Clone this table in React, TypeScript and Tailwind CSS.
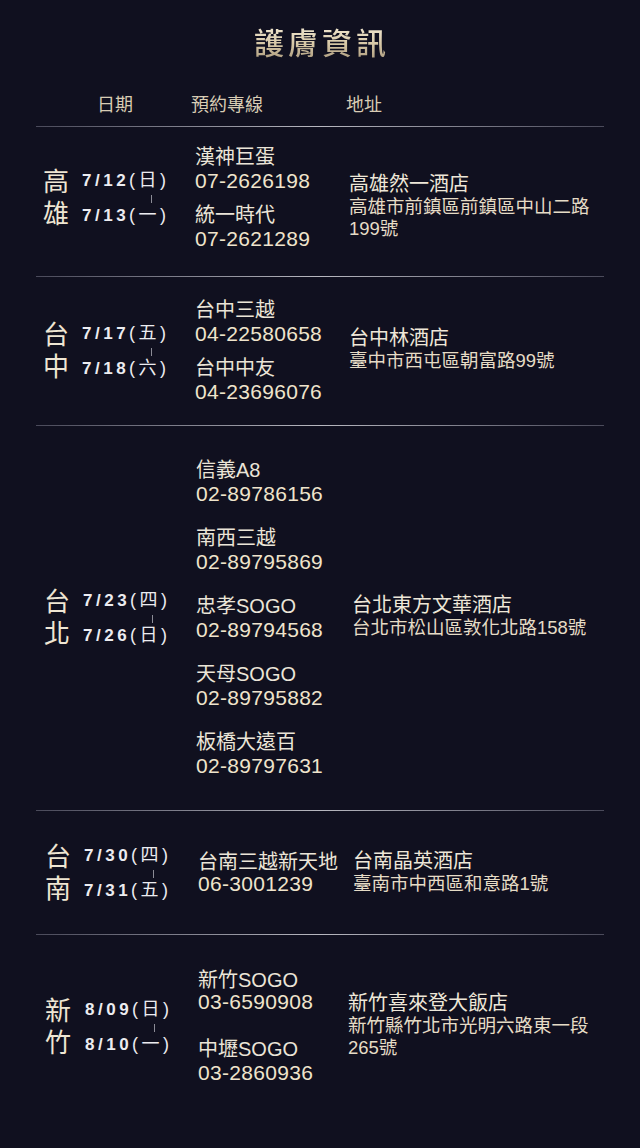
import React from "react";

type Phone = { name: string; tel: string; mt: string; lh: string };
type Section = {
  city: [string, string];
  dates: [[string, string], [string, string]];
  phones: Phone[];
  addrTitle: string;
  addrLines: string[];
  pad: string;
  rowPl: string;
  cityW: string;
  dateW: string;
  phoneW: string;
  addrMt: string;
  line: boolean;
};

const sections: Section[] = [
  {
    city: ["高", "雄"],
    dates: [["7/12", "日"], ["7/13", "一"]],
    phones: [
      { name: "漢神巨蛋", tel: "07-2626198", mt: "mt-0", lh: "leading-[24px]" },
      { name: "統一時代", tel: "07-2621289", mt: "mt-[10px]", lh: "leading-[24px]" },
    ],
    addrTitle: "高雄然一酒店",
    addrLines: ["高雄市前鎮區前鎮區中山二路", "199號"],
    pad: "pt-[18px] pb-[25px]",
    rowPl: "pl-[43px]",
    cityW: "w-[39px]",
    dateW: "w-[113px]",
    phoneW: "w-[154px]",
    addrMt: "mt-[16px]",
    line: true,
  },
  {
    city: ["台", "中"],
    dates: [["7/17", "五"], ["7/18", "六"]],
    phones: [
      { name: "台中三越", tel: "04-22580658", mt: "mt-0", lh: "leading-[24px]" },
      { name: "台中中友", tel: "04-23696076", mt: "mt-[10px]", lh: "leading-[24px]" },
    ],
    addrTitle: "台中林酒店",
    addrLines: ["臺中市西屯區朝富路99號"],
    pad: "pt-[21px] pb-[21px]",
    rowPl: "pl-[43px]",
    cityW: "w-[39px]",
    dateW: "w-[113px]",
    phoneW: "w-[154px]",
    addrMt: "mt-[-4px]",
    line: true,
  },
  {
    city: ["台", "北"],
    dates: [["7/23", "四"], ["7/26", "日"]],
    phones: [
      { name: "信義A8", tel: "02-89786156", mt: "mt-0", lh: "leading-[24px]" },
      { name: "南西三越", tel: "02-89795869", mt: "mt-[20px]", lh: "leading-[24px]" },
      { name: "忠孝SOGO", tel: "02-89794568", mt: "mt-[20px]", lh: "leading-[24px]" },
      { name: "天母SOGO", tel: "02-89795882", mt: "mt-[20px]", lh: "leading-[24px]" },
      { name: "板橋大遠百", tel: "02-89797631", mt: "mt-[20px]", lh: "leading-[24px]" },
    ],
    addrTitle: "台北東方文華酒店",
    addrLines: ["台北市松山區敦化北路158號"],
    pad: "pt-[32px] pb-[32px]",
    rowPl: "pl-[44px]",
    cityW: "w-[39px]",
    dateW: "w-[113px]",
    phoneW: "w-[156px]",
    addrMt: "mt-[-4px]",
    line: true,
  },
  {
    city: ["台", "南"],
    dates: [["7/30", "四"], ["7/31", "五"]],
    phones: [
      { name: "台南三越新天地", tel: "06-3001239", mt: "mt-0", lh: "leading-[22px]" },
    ],
    addrTitle: "台南晶英酒店",
    addrLines: ["臺南市中西區和意路1號"],
    pad: "pt-[30px] pb-[29px]",
    rowPl: "pl-[45px]",
    cityW: "w-[39px]",
    dateW: "w-[114px]",
    phoneW: "w-[155px]",
    addrMt: "mt-[-3px]",
    line: true,
  },
  {
    city: ["新", "竹"],
    dates: [["8/09", "日"], ["8/10", "一"]],
    phones: [
      { name: "新竹SOGO", tel: "03-6590908", mt: "mt-0", lh: "leading-[22px]" },
      { name: "中壢SOGO", tel: "03-2860936", mt: "mt-[24px]", lh: "leading-[24px]" },
    ],
    addrTitle: "新竹喜來登大飯店",
    addrLines: ["新竹縣竹北市光明六路東一段", "265號"],
    pad: "pt-[34px] pb-[30px]",
    rowPl: "pl-[45px]",
    cityW: "w-[40px]",
    dateW: "w-[113px]",
    phoneW: "w-[150px]",
    addrMt: "mt-[-4px]",
    line: false,
  },
];

function Divider() {
  return (
    <div className="mx-[36px] h-px bg-linear-to-r from-[#4a4a5a] via-[#b8b8c0] to-[#4a4a5a]" />
  );
}

function DateLine({ d, w }: { d: string; w: string }) {
  return (
    <div className="leading-[22px] text-[17px] text-[#ececf0] whitespace-nowrap tracking-[3.5px]">
      <span className="font-bold">{d}</span>
      <span className="font-normal text-[18px]">(</span>
      <span className="font-normal text-[18px]">{w}</span>
      <span className="font-normal text-[18px]">)</span>
    </div>
  );
}

function SectionRow({ s }: { s: Section }) {
  return (
    <>
      <div className={`flex items-center ${s.rowPl} ${s.pad}`}>
        <div className={`${s.cityW} shrink-0 flex flex-col text-[26px] leading-[32px] text-[#efe6d3]`}>
          <span>{s.city[0]}</span>
          <span>{s.city[1]}</span>
        </div>
        <div className={`${s.dateW} shrink-0 flex flex-col`}>
          <DateLine d={s.dates[0][0]} w={s.dates[0][1]} />
          <div className="ml-[69px] mt-[3px] mb-[1px] h-[8px] w-px bg-[#8c8c96]" />
          <DateLine d={s.dates[1][0]} w={s.dates[1][1]} />
        </div>
        <div className={`${s.phoneW} shrink-0 flex flex-col`}>
          {s.phones.map((p) => (
            <div key={p.tel} className={`flex flex-col ${p.mt}`}>
              <span className={`text-[20px] ${p.lh} text-[#ebe5d8] whitespace-nowrap`}>{p.name}</span>
              <span className={`text-[21px] ${p.lh} tracking-[0.3px] text-[#efe4cc] whitespace-nowrap`}>{p.tel}</span>
            </div>
          ))}
        </div>
        <div className={`flex-1 min-w-0 flex flex-col ${s.addrMt}`}>
          <span className="text-[20px] leading-[24px] text-[#eee7d8] whitespace-nowrap">{s.addrTitle}</span>
          {s.addrLines.map((l) => (
            <span key={l} className="text-[18.5px] leading-[22px] text-[#e6dcc6] whitespace-nowrap">
              {l}
            </span>
          ))}
        </div>
      </div>
      {s.line && <Divider />}
    </>
  );
}

export default function App() {
  return (
    <div className="min-h-[1148px] w-full bg-[#10101f] font-['Liberation_Sans','Noto_Sans_CJK_TC',sans-serif]">
      <div className="pt-[26px] flex justify-center">
        <h1 className="inline-block text-[30px] leading-[36px] tracking-[4px] pl-[4px] font-medium text-transparent bg-clip-text bg-linear-to-b from-[#f2e8d2] via-[#d6c7a6] to-[#a8977a]">
          護膚資訊
        </h1>
      </div>
      <div className="mt-[31px] flex pl-[97px] text-[18px] leading-[24px] text-[#d8ccb4]">
        <span className="w-[94px]">日期</span>
        <span className="w-[155px]">預約專線</span>
        <span>地址</span>
      </div>
      <div className="mt-[9px]">
        <Divider />
      </div>
      {sections.map((s) => (
        <SectionRow key={s.addrTitle} s={s} />
      ))}
    </div>
  );
}
